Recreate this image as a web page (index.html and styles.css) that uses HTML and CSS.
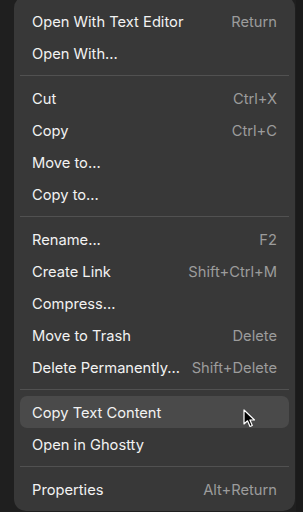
FILE: index.html
```html
<!DOCTYPE html>
<html>
<head>
<meta charset="utf-8">
<link rel="stylesheet" href="styles.css">
</head>
<body>
<div class="menu">
  <div class="item"><span>Open With Text Editor</span><span class="key">Return</span></div>
  <div class="item"><span>Open With...</span></div>
  <div class="sep"></div>
  <div class="item"><span>Cut</span><span class="key">Ctrl+X</span></div>
  <div class="item"><span>Copy</span><span class="key">Ctrl+C</span></div>
  <div class="item"><span>Move to...</span></div>
  <div class="item"><span>Copy to...</span></div>
  <div class="sep"></div>
  <div class="item"><span>Rename...</span><span class="key">F2</span></div>
  <div class="item"><span>Create Link</span><span class="key">Shift+Ctrl+M</span></div>
  <div class="item"><span>Compress...</span></div>
  <div class="item"><span>Move to Trash</span><span class="key">Delete</span></div>
  <div class="item"><span>Delete Permanently...</span><span class="key">Shift+Delete</span></div>
  <div class="sep"></div>
  <div class="item hover"><span>Copy Text Content</span></div>
  <div class="item"><span>Open in Ghostty</span></div>
  <div class="sep"></div>
  <div class="item"><span>Properties</span><span class="key">Alt+Return</span></div>
</div>
<svg class="cursor" width="14" height="20" viewBox="0 0 14 20">
  <path d="M1 1 L1 15 L4.5 11.8 L7 17.5 L9.3 16.5 L6.9 11 L11.5 11 Z" fill="#000" stroke="#fff" stroke-width="1.2" stroke-linejoin="round"/>
</svg>
</body>
</html>
```

FILE: styles.css
```css
html, body {
  margin: 0;
  padding: 0;
}
body {
  width: 303px;
  height: 512px;
  overflow: hidden;
  background: linear-gradient(to right, #1f1f1f 0, #1f1f1f 296px, #1b1b1b 296px);
  font-family: Inter, "Noto Sans", sans-serif;
  position: relative;
}
.menu {
  margin-left: 14px;
  margin-top: -4px;
  width: 281px;
  box-sizing: border-box;
  padding: 9px 6px 6px 6px;
  background: #383838;
  border-radius: 12px;
}
.item {
  height: 32px;
  box-sizing: border-box;
  display: flex;
  align-items: center;
  justify-content: space-between;
  padding: 2px 12px 0 12px;
  border-radius: 7px;
  color: #f2f2f2;
  font-size: 14.7px;
}
.item.hover {
  background: #4a4a4a;
}
.key {
  color: #9c9c9c;
}
.sep {
  height: 13px;
  display: flex;
  align-items: center;
}
.sep::before {
  content: "";
  display: block;
  width: 100%;
  height: 1px;
  background: #515151;
}
.cursor {
  position: absolute;
  left: 243px;
  top: 409px;
}
```
